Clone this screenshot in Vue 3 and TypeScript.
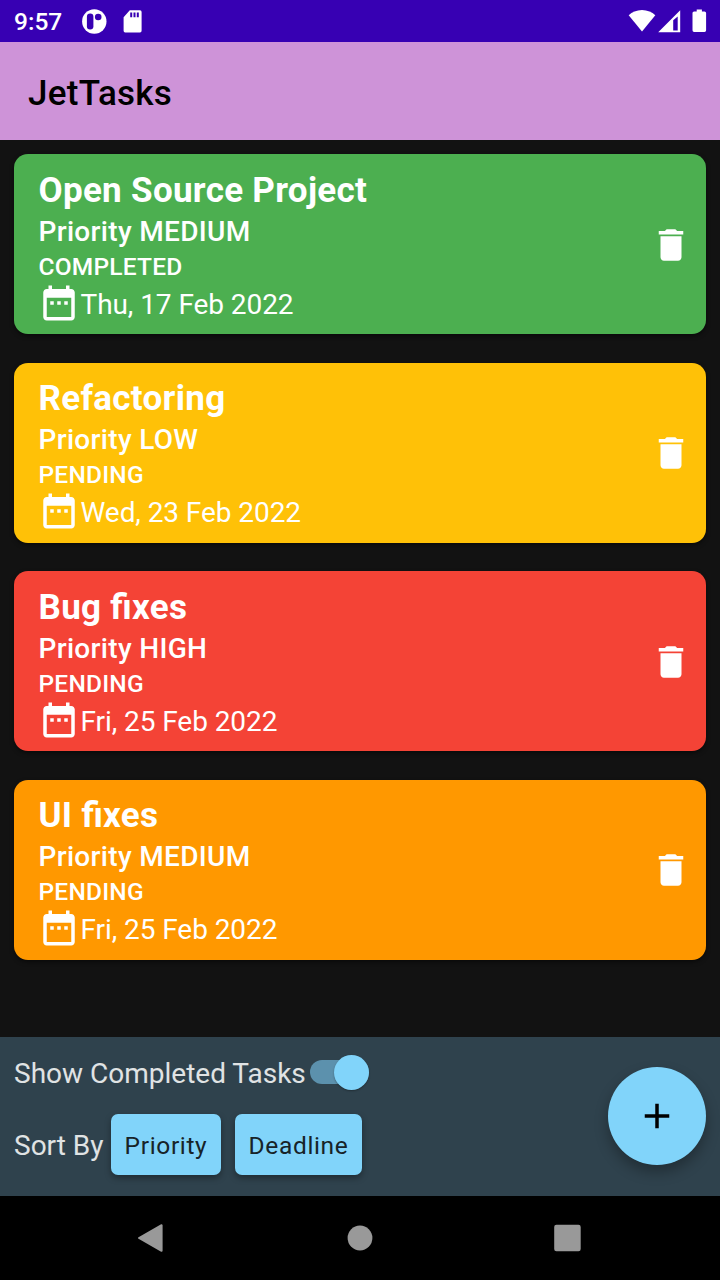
<script setup lang="ts">
import { ref, computed } from 'vue'

interface Task {
  title: string
  priority: 'LOW' | 'MEDIUM' | 'HIGH'
  status: 'PENDING' | 'COMPLETED'
  date: string
  tone: string
}

const tasks = ref<Task[]>([
  { title: 'Open Source Project', priority: 'MEDIUM', status: 'COMPLETED', date: 'Thu, 17 Feb 2022', tone: 'green' },
  { title: 'Refactoring', priority: 'LOW', status: 'PENDING', date: 'Wed, 23 Feb 2022', tone: 'amber' },
  { title: 'Bug fixes', priority: 'HIGH', status: 'PENDING', date: 'Fri, 25 Feb 2022', tone: 'red' },
  { title: 'UI fixes', priority: 'MEDIUM', status: 'PENDING', date: 'Fri, 25 Feb 2022', tone: 'orange' },
])
const showCompleted = ref(true)
const visibleTasks = computed(() =>
  tasks.value.filter((t) => showCompleted.value || t.status !== 'COMPLETED'),
)
function removeTask(task: Task) {
  tasks.value = tasks.value.filter((t) => t !== task)
}
</script>

<template>
  <div class="screen">
    <header class="status-bar">
      <span class="clock">9:57</span>
      <svg class="app-icon" width="25" height="25" viewBox="0 0 25 25">
        <circle cx="12.3" cy="12.5" r="12.2" fill="#fff" />
        <rect x="4.9" y="4.6" width="6.5" height="15.8" rx="3.2" fill="#3700b3" />
        <circle cx="16.2" cy="8" r="3.3" fill="#3700b3" />
      </svg>
      <svg class="sd-icon" width="19" height="23" viewBox="0 0 19 23">
        <path fill="#fff" fill-rule="evenodd" d="M6.8 .3H17a1.6 1.6 0 0 1 1.6 1.6V20.8A1.6 1.6 0 0 1 17 22.4H2.2A1.6 1.6 0 0 1 .6 20.8V7.2ZM7.2 2.6V7.2H9.2V2.6ZM10.5 2.6V7.2H12.5V2.6ZM13.8 2.6V7.2H15.8V2.6Z" />
      </svg>
      <span class="spacer" />
      <svg class="wifi" width="28" height="24" viewBox="0 0 28 24">
        <path fill="#fff" d="M14 22.5.7 6.2C4 3 8.6.9 14 .9S24 3 27.3 6.2Z" />
      </svg>
      <svg class="signal" width="23" height="23" viewBox="0 0 23 23">
        <path fill="#fff" fill-rule="evenodd" d="M.2 22.3 22.2.3V22.3ZM15.2 10.3V20.4H19.7V6.5Z" />
      </svg>
      <svg class="battery" width="15" height="24" viewBox="0 0 15 24">
        <path fill="#fff" d="M4.7.5h5.2v2h2.6a1.6 1.6 0 0 1 1.6 1.6v17.2a1.6 1.6 0 0 1-1.6 1.6H2.1A1.6 1.6 0 0 1 .5 21.3V4.1A1.6 1.6 0 0 1 2.1 2.5h2.6z" />
      </svg>
    </header>

    <div class="app-bar"><h1>JetTasks</h1></div>

    <main class="list">
      <article v-for="task in visibleTasks" :key="task.title" class="card" :class="task.tone">
        <div class="info">
          <h2>{{ task.title }}</h2>
          <p class="priority">Priority {{ task.priority }}</p>
          <p class="state">{{ task.status }}</p>
          <div class="date-row">
            <svg width="42" height="42" viewBox="0 0 24 24">
              <path fill="#fff" d="M9 11H7v2h2v-2zm4 0h-2v2h2v-2zm4 0h-2v2h2v-2zm2-7h-1V2h-2v2H8V2H6v2H5c-1.11 0-1.99.9-1.99 2L3 20c0 1.1.89 2 2 2h14c1.1 0 2-.9 2-2V6c0-1.1-.9-2-2-2zm0 16H5V9h14v11z" />
            </svg>
            <span class="date">{{ task.date }}</span>
          </div>
        </div>
        <button class="delete" aria-label="Delete" @click="removeTask(task)">
          <svg width="42" height="42" viewBox="0 0 24 24">
            <path fill="#fff" d="M6 19c0 1.1.9 2 2 2h8c1.1 0 2-.9 2-2V7H6v12zM19 4h-3.5l-1-1h-5l-1 1H5v2h14V4z" />
          </svg>
        </button>
      </article>
    </main>

    <footer class="bottom-bar">
      <div class="controls">
        <div class="toggle-row">
          <span class="label show-label">Show Completed Tasks</span>
          <button class="switch" :class="{ off: !showCompleted }" aria-label="Toggle" @click="showCompleted = !showCompleted">
            <span class="thumb" />
          </button>
        </div>
        <div class="sort-row">
          <span class="label sort-label">Sort By</span>
          <button class="chip by-priority">Priority</button>
          <button class="chip by-deadline">Deadline</button>
        </div>
      </div>
      <button class="fab" aria-label="Add">
        <svg width="42" height="42" viewBox="0 0 24 24"><path d="M19 13h-6v6h-2v-6H5v-2h6V5h2v6h6v2z" /></svg>
      </button>
    </footer>

    <nav class="nav-bar">
      <svg width="28" height="30" viewBox="0 0 28 30"><path fill="#999" stroke="#999" stroke-width="2" stroke-linejoin="round" d="M1 15 23.6 2.2V27.8Z" /></svg>
      <svg width="28" height="30" viewBox="0 0 28 30"><circle cx="14" cy="15" r="12.4" fill="#999" /></svg>
      <svg width="28" height="30" viewBox="0 0 28 30"><rect x=".2" y="1.8" width="26.5" height="26.5" rx="2.2" fill="#999" /></svg>
    </nav>
  </div>
</template>

<style>
html,
body {
  margin: 0;
  background: #121212;
}
</style>

<style scoped>
.screen {
  width: 720px;
  height: 1280px;
  display: flex;
  flex-direction: column;
  background: #121212;
  font-family: Roboto, 'Liberation Sans', sans-serif;
  overflow: hidden;
}
button {
  border: 0;
  padding: 0;
  font: inherit;
}
svg {
  display: block;
  flex: none;
}
h1,
h2,
p {
  margin: 0;
  white-space: nowrap;
}
.status-bar {
  height: 42px;
  flex: none;
  display: flex;
  align-items: center;
  box-sizing: border-box;
  padding: 0 13px 0 14px;
  background: #3700b3;
  color: #fff;
}
.clock {
  width: 68px;
  font-size: 24.5px;
  font-weight: 500;
  line-height: 30px;
  padding-top: 1px;
}
.sd-icon {
  margin-left: 16px;
}
.spacer {
  flex: 1;
}
.signal {
  margin-left: 2px;
  margin-right: -1px;
}
.battery {
  margin-left: 12px;
}
.app-bar {
  height: 98px;
  flex: none;
  display: flex;
  align-items: center;
  padding-left: 28px;
  background: #ce93d8;
}
h1 {
  font-size: 35px;
  font-weight: 500;
  line-height: 41px;
  letter-spacing: 0.26px;
  padding-top: 4px;
}
.list {
  flex: 1;
  display: flex;
  flex-direction: column;
  gap: 28.2px;
  padding: 14.2px 14px 0;
}
.card {
  height: 180.3px;
  display: flex;
  align-items: center;
  box-sizing: border-box;
  padding: 0 14px 0 24.5px;
  border-radius: 14px;
  color: #fff;
  box-shadow: 0 2px 4px rgba(0, 0, 0, 0.5);
}
.green { background: #4caf50; }
.amber { background: #ffc107; }
.red { background: #f44336; }
.orange { background: #ff9800; }
.info {
  flex: 1;
  align-self: flex-start;
  padding-top: 15.5px;
}
h2 {
  font-size: 35px;
  font-weight: 700;
  line-height: 41px;
  letter-spacing: 0.3px;
  font-feature-settings: 'liga' 1;
}
.priority {
  margin-top: 4.3px;
  font-size: 28px;
  font-weight: 500;
  line-height: 33px;
  letter-spacing: 0.32px;
}
.state {
  margin-top: 4px;
  font-size: 24.5px;
  font-weight: 500;
  line-height: 29px;
  letter-spacing: 0.21px;
}
.date-row {
  display: flex;
  align-items: center;
  margin-top: 0.7px;
  margin-left: -0.5px;
}
.date {
  margin-left: 0.5px;
  padding-top: 3.4px;
  font-size: 28px;
  line-height: 33px;
  letter-spacing: -0.07px;
}
.delete {
  background: none;
  margin-top: 0.6px;
}
.bottom-bar {
  height: 159px;
  flex: none;
  display: flex;
  align-items: center;
  justify-content: space-between;
  box-sizing: border-box;
  padding: 0 14px 1px;
  background: #2f424d;
}
.controls {
  align-self: flex-start;
  padding-top: 17px;
}
.toggle-row {
  display: flex;
  align-items: center;
  height: 36px;
}
.label {
  font-size: 28px;
  line-height: 33px;
  color: #e0e3e4;
  white-space: nowrap;
}
.show-label {
  width: 295.5px;
  padding-top: 3px;
}
.switch {
  width: 59.5px;
  height: 24.5px;
  display: flex;
  align-items: center;
  justify-content: flex-end;
  border-radius: 13px;
  background: #5c91ad;
}
.switch.off {
  justify-content: flex-start;
}
.thumb {
  flex: none;
  width: 35px;
  height: 35px;
  border-radius: 50%;
  background: #81d4fa;
  box-shadow: 0 1px 2px rgba(0, 0, 0, 0.3);
}
.sort-row {
  display: flex;
  align-items: center;
  margin-top: 24px;
}
.sort-label {
  width: 97px;
  padding-top: 2px;
}
.chip {
  height: 61px;
  border-radius: 7px;
  background: #81d4fa;
  color: #172328;
  font-size: 24.5px;
  letter-spacing: 0.65px;
  line-height: 61px;
  padding-top: 1px;
  box-shadow: 0 3px 6px rgba(0, 0, 0, 0.35);
}
.by-priority {
  width: 110px;
}
.by-deadline {
  width: 127px;
  margin-left: 14px;
}
.fab {
  width: 98px;
  height: 98px;
  display: grid;
  place-items: center;
  border-radius: 50%;
  background: #81d4fa;
  box-shadow: 0 7px 14px rgba(0, 0, 0, 0.3);
}
.nav-bar {
  height: 84px;
  flex: none;
  display: flex;
  align-items: center;
  justify-content: space-between;
  box-sizing: border-box;
  padding: 0 138px;
  background: #000;
}
</style>
